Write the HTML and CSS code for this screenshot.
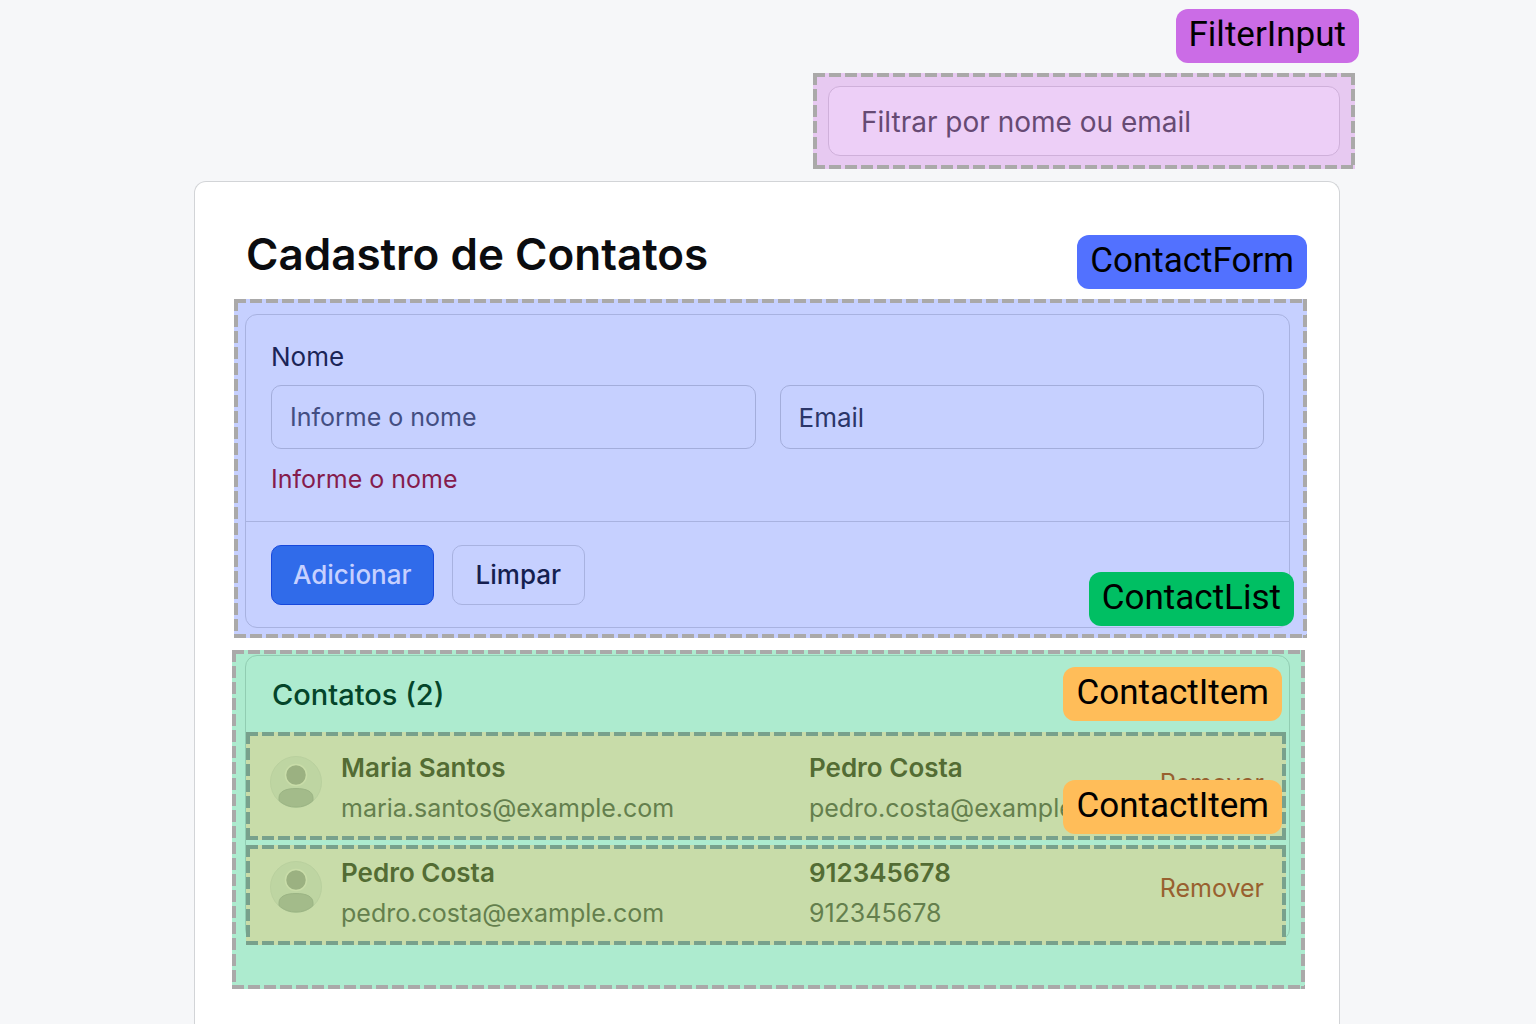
FILE: index.html
```html
<!DOCTYPE html>
<html lang="pt-BR">
<head>
<meta charset="utf-8">
<meta name="viewport" content="width=device-width, initial-scale=1">
<title>Cadastro de Contatos</title>
<link rel="stylesheet" href="styles.css">
</head>
<body>
<div class="page">
  <div class="region region-filter">
    <span class="tag tag-filter">FilterInput</span>
    <input class="filter-input" type="search" placeholder="Filtrar por nome ou email" aria-label="Filtrar por nome ou email">
  </div>

  <main class="card">
    <h1 class="title">Cadastro de Contatos</h1>

    <div class="region region-form">
      <span class="tag tag-form">ContactForm</span>
      <form class="panel form-panel">
        <div class="fields">
          <label class="label" for="nome">Nome</label>
          <input class="field" id="nome" type="text" placeholder="Informe o nome" aria-describedby="nome-erro">
          <input class="field field-email" type="email" placeholder="Email" aria-label="Email">
          <p class="error" id="nome-erro">Informe o nome</p>
        </div>
        <div class="actions">
          <button class="button button-primary" type="button">Adicionar</button>
          <button class="button" type="reset">Limpar</button>
        </div>
      </form>
    </div>

    <div class="region region-list">
      <span class="tag tag-list">ContactList</span>
      <section class="panel list-panel">
        <h2 class="subtitle">Contatos (2)</h2>
        <ul class="items">
          <li class="region item item-first">
            <span class="tag tag-item">ContactItem</span>
            <svg class="avatar" viewBox="0 0 52 52" aria-hidden="true">
              <circle cx="26" cy="26" r="25.500" fill="#bed5a2" stroke="#b9d09e"/>
              <circle cx="26" cy="19" r="10.500" fill="#9bb181" stroke="#c9dda9" stroke-width="1.500"/>
              <path d="M9 44.500V42c0-6.500 6.500-9.500 17-9.500S43 35.500 43 42v2.500C38.500 49 32.500 51 26 51S13.500 49 9 44.500Z" fill="#a3bb8a" stroke="#9bb484"/>
            </svg>
            <div class="info"><strong class="name">Maria Santos</strong><span class="detail">maria.santos@example.com</span></div>
            <div class="info"><strong class="name">Pedro Costa</strong><span class="detail">pedro.costa@example.com</span></div>
            <button class="remove" type="button">Remover</button>
          </li>
          <li class="region item">
            <span class="tag tag-item">ContactItem</span>
            <svg class="avatar" viewBox="0 0 52 52" aria-hidden="true">
              <circle cx="26" cy="26" r="25.500" fill="#bed5a2" stroke="#b9d09e"/>
              <circle cx="26" cy="19" r="10.500" fill="#9bb181" stroke="#c9dda9" stroke-width="1.500"/>
              <path d="M9 44.500V42c0-6.500 6.500-9.500 17-9.500S43 35.500 43 42v2.500C38.500 49 32.500 51 26 51S13.500 49 9 44.500Z" fill="#a3bb8a" stroke="#9bb484"/>
            </svg>
            <div class="info"><strong class="name">Pedro Costa</strong><span class="detail">pedro.costa@example.com</span></div>
            <div class="info"><strong class="name">912345678</strong><span class="detail">912345678</span></div>
            <button class="remove" type="button">Remover</button>
          </li>
        </ul>
      </section>
    </div>
  </main>
</div>
</body>
</html>
```
FILE: styles.css
```css
*, *::before, *::after { box-sizing: border-box; }

body {
  margin: 0;
  background: #f6f7f9;
  color: #0b0c0f;
  font-family: Inter, "Liberation Sans", sans-serif;
  font-size: 25px;
  line-height: 32px;
}

h1, h2, p, ul { margin: 0; padding: 0; }
input, button { font: inherit; color: inherit; }

.page {
  display: flex;
  flex-direction: column;
  gap: 12px;
  min-height: 100vh;
  padding: 73px 196px 0 194px;
}

/* A tinted area outlined with 12px dashes and 4px gaps */
.region {
  --dash: #aaa9a9;
  position: relative;
}

.region::after {
  content: "";
  position: absolute;
  inset: 0;
  pointer-events: none;
  background:
    repeating-linear-gradient(90deg, var(--dash) 0 12px, transparent 12px 16px) top / 100% 4px no-repeat,
    repeating-linear-gradient(90deg, var(--dash) 0 12px, transparent 12px 16px) bottom / 100% 4px no-repeat,
    repeating-linear-gradient(180deg, var(--dash) 0 12px, transparent 12px 16px) left / 4px 100% no-repeat,
    repeating-linear-gradient(180deg, var(--dash) 0 12px, transparent 12px 16px) right / 4px 100% no-repeat;
}

.tag {
  position: absolute;
  z-index: 2;
  top: -64px;
  right: 0;
  height: 54px;
  padding: 0 13px;
  border-radius: 12px;
  color: #000;
  font-family: Roboto, sans-serif;
  font-size: 35px;
  line-height: 52px;
  white-space: nowrap;
}

.tag-filter { right: -4px; background: #cb6ce6; }
.tag-form { background: #5271ff; }
.tag-list { top: -78px; right: 11px; background: #00bf63; }
.tag-item { top: -65px; right: 4px; background: #ffbd59; }

.region-filter {
  align-self: flex-end;
  width: 542px;
  max-width: 100%;
  margin-right: -15px;
  padding: 13px 15px;
  background: #e7c9f1;
}

.filter-input {
  display: block;
  width: 100%;
  height: 70px;
  padding: 2px 32px 0;
  border: 1px solid #cfb0da;
  border-radius: 12px;
  background: #edcff7;
  font-size: 28px;
}

.filter-input::placeholder { color: #664a73; opacity: 1; }

.card {
  flex: 1;
  padding: 44px 49px 36px 50px;
  border: 1px solid #d2d4d7;
  border-bottom: 0;
  border-radius: 12px 12px 0 0;
  background: #fff;
}

.title {
  padding-left: 1px;
  font-size: 44px;
  font-weight: 600;
  line-height: 56px;
}

.region-form {
  margin: 17px -17px 12px -11px;
  padding: 15px 17px 10px 11px;
  background: #c6d0ff;
}

.panel {
  border: 1px solid #a8b2e0;
  border-radius: 12px;
}

.fields {
  display: grid;
  grid-template-columns: 1fr 1fr;
  column-gap: 24px;
  padding: 26px 25px;
  color: #1b2557;
}

.label { grid-column: 1 / -1; margin-bottom: 12px; font-size: 26px; }

.field {
  width: 100%;
  height: 64px;
  padding: 0 18px;
  border: 1px solid #a3addb;
  border-radius: 10px;
  background: transparent;
}

.field-email { font-size: 26px; }
.field::placeholder { color: #434e82; opacity: 1; }
.field-email::placeholder { color: #2b3669; }
.error { margin-top: 14px; color: #851c4d; }

.actions {
  display: flex;
  gap: 18px;
  padding: 23px 25px 22px;
  border-top: 1px solid #a8b2e0;
}

.button {
  height: 60px;
  padding: 0 23px;
  border: 1px solid #a8b2e0;
  border-radius: 10px;
  background: transparent;
  color: #151f50;
  font-size: 26px;
  font-weight: 500;
}

.button-primary {
  padding: 0 21px;
  border-color: #1748dc;
  background: #306bea;
  color: #c6d0ff;
}

.region-list {
  margin: 0 -15px 0 -13px;
  padding: 5px 15px 48px 13px;
  background: #adebcf;
}

.list-panel { border-color: #91cdb2; }

.subtitle {
  padding: 2px 26px 0;
  color: #04452a;
  font-size: 29px;
  font-weight: 500;
  line-height: 74px;
}

.items {
  display: flex;
  flex-direction: column;
  gap: 5px;
  margin: 0 3px -5px 0;
  list-style: none;
}

.item {
  --dash: #78a18c;
  display: grid;
  grid-template-columns: 52px 23fr 17fr auto;
  column-gap: 19px;
  align-items: start;
  padding: 8px 22px 12px 24px;
  background: #c8dca9;
}

.item-first { padding-top: 16px; }

.avatar { width: 52px; height: 52px; margin-top: 8px; }

.info { display: flex; flex-direction: column; min-width: 0; line-height: 40px; }
.name { color: #536c34; font-size: 26px; font-weight: 600; }
.detail { color: #647f4d; }

.remove {
  margin-top: 15px;
  padding: 0;
  border: 0;
  background: none;
  color: #98602f;
  line-height: 40px;
}
```
